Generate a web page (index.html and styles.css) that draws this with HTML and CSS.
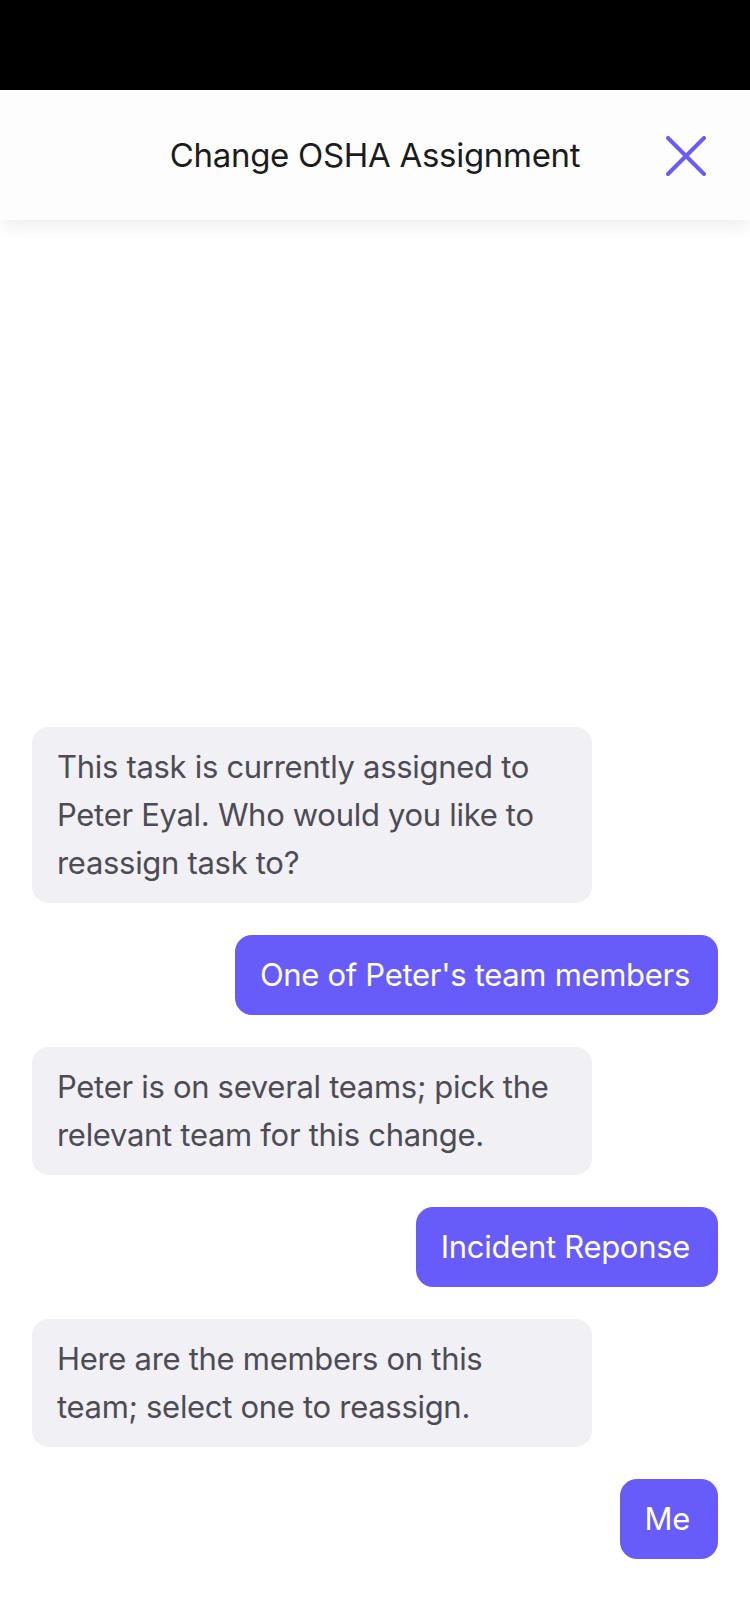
FILE: index.html
```html
<!DOCTYPE html>
<html>
<head>
<meta charset="utf-8">
<link rel="stylesheet" href="styles.css">
</head>
<body>
<div class="screen">
  <div class="status-bar"></div>
  <header class="nav">
    <h1 class="nav-title">Change OSHA Assignment</h1>
    <button class="close-btn" aria-label="Close">
      <svg width="40" height="40" viewBox="0 0 40 40"><path d="M2 2 L38 38 M38 2 L2 38" stroke="#6a5cf7" stroke-width="4" stroke-linecap="round" fill="none"/></svg>
    </button>
  </header>
  <main class="chat">
    <div class="msg bot">This task is currently assigned to Peter Eyal. Who would you like to reassign task to?</div>
    <div class="msg user">One of Peter's team members</div>
    <div class="msg bot">Peter is on several teams; pick the relevant team for this change.</div>
    <div class="msg user">Incident Reponse</div>
    <div class="msg bot">Here are the members on this team; select one to reassign.</div>
    <div class="msg user">Me</div>
  </main>
</div>
</body>
</html>
```

FILE: styles.css
```css
html, body {
  margin: 0;
  padding: 0;
  background: #ffffff;
}
.screen {
  width: 750px;
  height: 1624px;
  display: flex;
  flex-direction: column;
  font-family: "Inter", "Roboto", "Liberation Sans", sans-serif;
  overflow: hidden;
}
.status-bar {
  height: 90px;
  background: #000;
  flex: none;
}
.nav {
  height: 130px;
  flex: none;
  background: #fdfdfd;
  box-shadow: 0 6px 18px rgba(0,0,0,0.07);
  display: flex;
  align-items: center;
  justify-content: center;
  position: relative;
  z-index: 1;
}
.nav-title {
  margin: 0;
  font-size: 33px;
  font-weight: 400;
  color: #1c1c1e;
  letter-spacing: -0.3px;
}
.close-btn {
  position: absolute;
  right: 44px;
  top: 46px;
  width: 40px;
  height: 40px;
  padding: 0;
  border: 0;
  background: none;
  display: block;
}
.close-btn svg { display: block; }
.chat {
  flex: 1;
  display: flex;
  flex-direction: column;
  justify-content: flex-end;
  gap: 32px;
  padding: 0 32px 65px;
}
.msg {
  font-size: 31px;
  line-height: 48px;
  padding: 16px 25px;
  border-radius: 17px;
  letter-spacing: -0.3px;
}
.bot {
  align-self: flex-start;
  width: 560px;
  box-sizing: border-box;
  padding-right: 35px;
  background: #f1f0f5;
  color: #4d4c55;
}
.user {
  align-self: flex-end;
  background: #675cf9;
  color: #ffffff;
  padding-right: 28px;
}
```
